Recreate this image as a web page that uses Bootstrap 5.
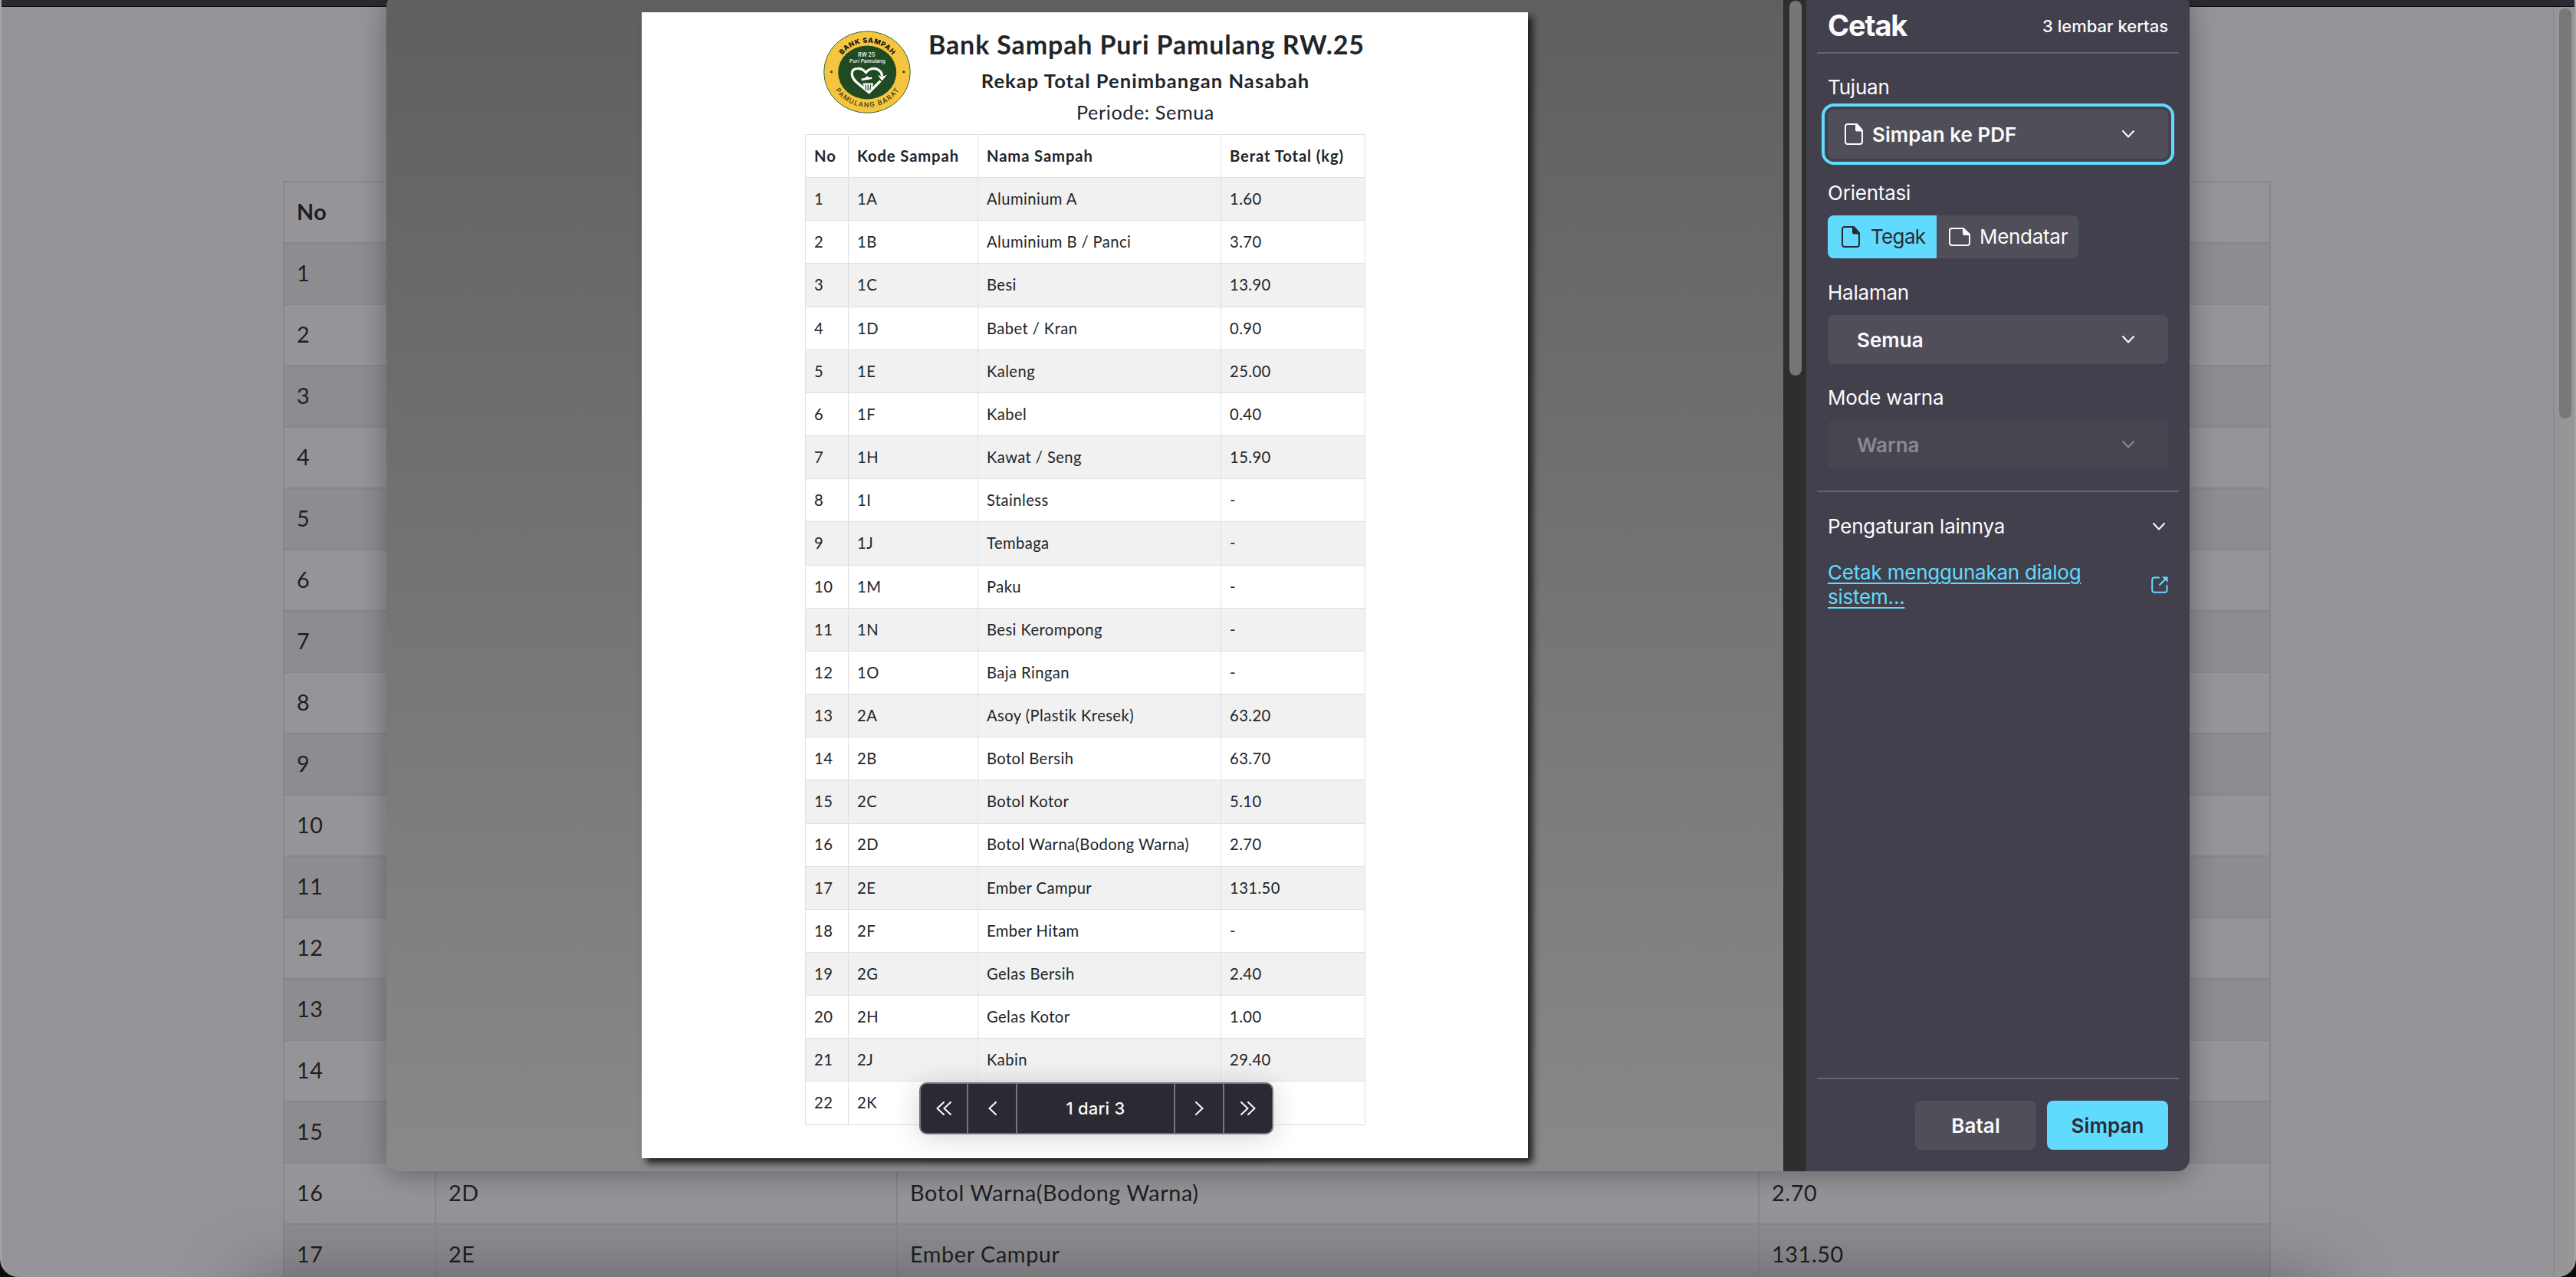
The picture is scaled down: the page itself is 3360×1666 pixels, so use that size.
<!DOCTYPE html>
<html lang="id">
<head>
<meta charset="utf-8">
<title>Cetak</title>
<link href="https://cdn.jsdelivr.net/npm/bootstrap@5.3.0/dist/css/bootstrap.min.css" rel="stylesheet">
<style>
html,body{height:1666px;margin:0;overflow:hidden;background:#0c0b0d}
body{font-family:Lato,sans-serif;color:#212529}
.window{width:3360px;height:1666px;background:#959499;border-radius:0 0 24px 24px;border:solid #a4a4a8;border-width:0 2px}
.chrome-bar{height:9px;margin:0 -2px;background:#2b2a33;border-bottom:1px solid #0c0c0f}
.viewport{height:1657px}
.back-scroll{width:28px;background:#969696;border-left:2px solid #8c8c90;padding:2px 0 0 6px}
.back-scroll i{display:block;width:16px;height:535px;border-radius:8px;background:#777779}
.grid-table{table-layout:fixed;margin:0;border-collapse:collapse;--bs-table-bg:transparent}
.grid-table th,.grid-table td{vertical-align:middle;white-space:nowrap;line-height:1.2;box-shadow:none!important}
.back-table{width:2591px;margin:227px 0 0 367px;font-size:28.8px;letter-spacing:.6px}
.back-table th,.back-table td{height:80px;padding:0 16px 2px;border:2px solid #87868b;color:#1e1f22}
.back-table tbody tr:nth-child(odd)>*{background:#8d8c91}
.dock-shade{left:320px;top:1672px;width:2710px;height:200px;box-shadow:0 0 96px rgba(0,0,0,.34)}
.dialog-box{left:504px;top:-8px;width:2352px;height:1536px;border-radius:16px;box-shadow:0 4px 36px rgba(0,0,0,.32)}
.preview{width:1822px;background:linear-gradient(#5f5f5f,#898989);padding:24px 0 0 333px}
.sheet{width:1156px;height:1495px;background:#fff;box-shadow:6px 6px 9px #1c1c1c;padding-left:213px}
.sheet-head{height:159px;padding:24px 0 0 24px;gap:23px}
.sheet-head svg{width:114px;height:108px}
.titles{width:566px;margin-top:-2px}
.t-one{font-size:34px;font-weight:700;line-height:40px;height:49px;letter-spacing:.86px}
.t-two{font-size:25.5px;font-weight:700;line-height:36px;height:41px;letter-spacing:1.07px}
.t-three{font-size:25.2px;line-height:36px;letter-spacing:.6px}
.print-table{width:730px;height:1292px;font-size:20.2px;letter-spacing:.42px}
.print-table th,.print-table td{height:56.17px;padding:0 11px 1px;border:1px solid #dfe0e3;color:#212529}
.print-table th{letter-spacing:.9px}
.print-table tbody tr:nth-child(odd)>*{background:#f1f1f1}
.track{width:30px;background:#2e2e2e;padding:9px 6px 0 8px}
.track i{display:block;width:16px;height:489px;border-radius:8px;background:#767676}
.pager{left:695px;top:1420px;width:462px;height:68px;background:#2b2a33;border:2px solid #76757a;border-radius:10px;color:#fbfbfe;font:500 22px Inter,sans-serif;letter-spacing:.25px;box-shadow:0 4px 36px rgba(0,0,0,.17)}
.pager>div{width:64px;border-right:2px solid #76757a}
.pager>div:first-child{width:62px}
.pager>div:nth-child(3){width:206px}
.pager>div:last-child{width:62px;border:0}
.side{width:500px;background:#42404c;color:#fbfbfe;font-family:Inter,sans-serif;font-size:26px;line-height:32px;letter-spacing:-.22px;padding:0 14px}
.side svg,.pager svg{fill:none;stroke:currentColor;flex:none}
.side-head{height:78px;padding:3px 14px 0;border-bottom:2px solid #64636d}
.side-head h1{font-size:38px;font-weight:700;letter-spacing:-1.15px;margin:4px 0 0}
.side-head span{font-size:22px;font-weight:500;letter-spacing:0;margin-top:4px}
.side-form{padding:27px 14px 28px;border-bottom:2px solid #64636d}
.caption{height:46px;padding-top:1px}
.group+.group{margin-top:28px}
.group.tight{margin-top:27px!important}
.tight .caption{height:46px}
.pick{height:64px;border-radius:8px;background:#504e59;font-weight:600;letter-spacing:.03px;padding:0 44px 0 38px}
.pick span{padding-top:1px}
.pick.has-icon{padding-left:22px;outline:4px solid #61dbfd;outline-offset:4px}
.pick.off{background:#474550;color:#8a8991}
.seg{width:327px;height:56px;border-radius:8px;overflow:hidden;background:#504e59}
.seg-on{width:142px;background:#61dbfd;color:#2b2a33;padding-left:18px;gap:14px;letter-spacing:-.66px}
.seg-off{padding-left:16px;gap:12px;letter-spacing:-.3px}
.side-more{padding:29px 14px 0}
.more-row{margin-bottom:28px}
.side-more a{color:#61dbfd;text-decoration:underline;text-decoration-thickness:2px;text-underline-offset:4px;width:340px}
.side-foot{border-top:2px solid #64636d;padding:28px 14px;gap:14px}
.act{width:158px;height:64px;border-radius:8px;border:0;background:#504e59;color:#fbfbfe;font-size:26px;font-weight:600;letter-spacing:.1px;padding:1px 0 0}
.act.go{background:#61dbfd;color:#2b2a33}
</style>
<script src="https://cdn.jsdelivr.net/npm/bootstrap@5.3.0/dist/js/bootstrap.bundle.min.js"></script>
</head>
<body>
<div class="window position-relative overflow-hidden">
  <div class="chrome-bar"></div>
  <div class="viewport d-flex justify-content-between">
    <div><table class="table grid-table back-table">
      <colgroup><col style="width:198px"><col style="width:602px"><col style="width:1124px"><col style="width:667px"></colgroup>
      <thead><tr><th>No</th><th>Kode Sampah</th><th>Nama Sampah</th><th>Berat Total (kg)</th></tr></thead>
      <tbody data-rows="17"></tbody>
    </table></div>
    <div class="back-scroll"><i></i></div>
  </div>
  <div class="dock-shade position-absolute"></div>
</div>

<div class="dialog-box position-absolute d-flex overflow-hidden">
  <div class="preview">
    <div class="sheet">
      <div class="sheet-head d-flex">
        <svg viewBox="14.5 9.5 114 108">
          <defs>
            <path id="arcTop" d="M32 63.7 A39.7 38.6 0 0 1 111.4 63.7"/>
            <path id="arcLow" d="M23.4 63.7 A48.3 45.6 0 0 0 120 63.7"/>
          </defs>
          <ellipse cx="71.5" cy="63.6" rx="56.3" ry="53.2" fill="#f5c540" stroke="#2f6a3a" stroke-width="1"/>
          <ellipse cx="71.7" cy="64" rx="38" ry="35" fill="#1f4a22"/>
          <circle cx="25" cy="63.2" r="1.5" fill="#2c3a1c"/><circle cx="119.3" cy="63.2" r="1.5" fill="#2c3a1c"/>
          <g font-family="Inter,sans-serif" text-anchor="middle">
            <text font-size="9" font-weight="800" fill="#111"><textPath href="#arcTop" startOffset="50%" textLength="75">BANK SAMPAH</textPath></text>
            <text font-size="8.6" font-weight="500" fill="#33310f"><textPath href="#arcLow" startOffset="50%" textLength="98">PAMULANG BARAT</textPath></text>
            <text x="70.7" y="43" font-size="7" font-weight="600" fill="#e9efe6">RW 25</text>
            <text x="71.8" y="51" font-size="6.6" font-weight="600" fill="#e9efe6" textLength="46.5">Puri Pamulang</text>
          </g>
          <path d="M89 75 L74 90 L58 77 C49 69 50 59 59 59 C65 58.500 68 62 70 64 C74 59 80 58 84 59.500 C89 61.500 91 65 91 69" fill="none" stroke="#fff" stroke-width="3.200"/>
          <path d="M85.500 67.500 L91 69.500 L97.500 67 L91 75z" fill="#fff"/>
          <path d="M64 72 L77.500 70 L77.800 72.500 L64.500 74.800z M69 70 l4-1 .5 2-4 .7z" fill="#fff"/>
          <path d="M66 78 H79.500 L77.500 88 L73.500 90.500 L68.500 87.500z" fill="#fff"/>
          <path d="M69.300 80 l.8 7 M72.700 80 v7.500 M76.200 80 l-.7 7" stroke="#1f4a22" stroke-width="1.300" fill="none"/>
        </svg>
        <div class="titles text-center text-nowrap">
          <div class="t-one">Bank Sampah Puri Pamulang RW.25</div>
          <div class="t-two">Rekap Total Penimbangan Nasabah</div>
          <div class="t-three">Periode: Semua</div>
        </div>
      </div>
      <table class="table grid-table print-table">
        <colgroup><col style="width:56px"><col style="width:169px"><col style="width:317px"><col style="width:188px"></colgroup>
        <thead><tr><th>No</th><th>Kode Sampah</th><th>Nama Sampah</th><th>Berat Total (kg)</th></tr></thead>
        <tbody data-rows="22"></tbody>
      </table>
    </div>
  </div>
  <div class="track"><i></i></div>

  <div class="side d-flex flex-column">
    <div class="side-head d-flex justify-content-between align-items-center"><h1>Cetak</h1><span>3 lembar kertas</span></div>
    <div class="side-form">
      <div class="group">
        <div class="caption">Tujuan</div>
        <div class="pick has-icon d-flex align-items-center">
          <svg class="me-2" width="24" height="28" viewBox="0 0 24 28"><path d="M4 1h12l7 8v15a3 3 0 0 1-3 3H4a3 3 0 0 1-3-3V4a3 3 0 0 1 3-3z" stroke-width="2"/><path d="M14 1h2l7 8v1.500h-7a2 2 0 0 1-2-2z" fill="currentColor" stroke="none"/></svg>
          <span class="flex-grow-1 ps-1">Simpan ke PDF</span>
          <svg width="16" height="10" viewBox="0 0 16 10"><path d="M1 1l7 7.500L15 1" stroke-width="2" stroke-linecap="round" stroke-linejoin="round"/></svg>
        </div>
      </div>
      <div class="group">
        <div class="caption">Orientasi</div>
        <div class="seg d-flex">
          <div class="seg-on d-flex align-items-center">
            <svg width="24" height="28" viewBox="0 0 24 28"><path d="M4 1h12l7 8v15a3 3 0 0 1-3 3H4a3 3 0 0 1-3-3V4a3 3 0 0 1 3-3z" stroke-width="2"/><path d="M14 1h2l7 8v1.500h-7a2 2 0 0 1-2-2z" fill="currentColor" stroke="none"/></svg>
            <span>Tegak</span>
          </div>
          <div class="seg-off d-flex align-items-center">
            <svg width="28" height="24" viewBox="0 0 28 24"><path d="M4 1h15l8 8v11a3 3 0 0 1-3 3H4a3 3 0 0 1-3-3V4a3 3 0 0 1 3-3z" stroke-width="2"/><path d="M18 1h1l8 8v1h-7a2 2 0 0 1-2-2z" fill="currentColor" stroke="none"/></svg>
            <span>Mendatar</span>
          </div>
        </div>
      </div>
      <div class="group">
        <div class="caption">Halaman</div>
        <div class="pick d-flex align-items-center"><span class="flex-grow-1">Semua</span>
          <svg width="16" height="10" viewBox="0 0 16 10"><path d="M1 1l7 7.500L15 1" stroke-width="2" stroke-linecap="round" stroke-linejoin="round"/></svg></div>
      </div>
      <div class="group tight">
        <div class="caption">Mode warna</div>
        <div class="pick off d-flex align-items-center"><span class="flex-grow-1">Warna</span>
          <svg width="16" height="10" viewBox="0 0 16 10"><path d="M1 1l7 7.500L15 1" stroke-width="2" stroke-linecap="round" stroke-linejoin="round"/></svg></div>
      </div>
    </div>
    <div class="side-more flex-grow-1">
      <div class="more-row d-flex align-items-center justify-content-between pe-1"><span>Pengaturan lainnya</span>
        <svg width="16" height="10" viewBox="0 0 16 10"><path d="M1 1l7 7.500L15 1" stroke-width="2" stroke-linecap="round" stroke-linejoin="round"/></svg></div>
      <div class="d-flex align-items-center justify-content-between"><a href="#">Cetak menggunakan dialog sistem...</a>
        <svg width="22" height="22" viewBox="0 0 22 22" style="color:#61dbfd"><path d="M10 1.500H4A2.800 2.800 0 0 0 1.200 4.300V18A2.800 2.800 0 0 0 4 20.800h13.700a2.800 2.800 0 0 0 2.800-2.800v-6M11 11l8-8" stroke-width="2" stroke-linecap="round"/><path d="M14 .5h7.500V8z" fill="currentColor" stroke="none"/></svg></div>
    </div>
    <div class="side-foot d-flex justify-content-end"><button class="act">Batal</button><button class="act go">Simpan</button></div>
  </div>

  <div class="pager position-absolute d-flex">
    <div class="d-flex align-items-center justify-content-center"><svg width="20" height="18" viewBox="0 0 20 18"><path d="M10 1L1.500 9L10 17M19 1L10.500 9L19 17" stroke-width="2" stroke-linecap="round"/></svg></div>
    <div class="d-flex align-items-center justify-content-center"><svg width="11" height="18" viewBox="0 0 11 18"><path d="M10 1L1.500 9L10 17" stroke-width="2" stroke-linecap="round"/></svg></div>
    <div class="d-flex align-items-center justify-content-center"><span>1 dari 3</span></div>
    <div class="d-flex align-items-center justify-content-center"><svg width="11" height="18" viewBox="0 0 11 18"><path d="M1 1l8.500 8L1 17" stroke-width="2" stroke-linecap="round"/></svg></div>
    <div class="d-flex align-items-center justify-content-center"><svg width="20" height="18" viewBox="0 0 20 18"><path d="M1 1l8.500 8L1 17M10 1l8.500 8L10 17" stroke-width="2" stroke-linecap="round"/></svg></div>
  </div>
</div>
<script>
const items = [["1A","Aluminium A","1.60"],["1B","Aluminium B / Panci","3.70"],["1C","Besi","13.90"],["1D","Babet / Kran","0.90"],["1E","Kaleng","25.00"],["1F","Kabel","0.40"],["1H","Kawat / Seng","15.90"],["1I","Stainless","-"],["1J","Tembaga","-"],["1M","Paku","-"],["1N","Besi Kerompong","-"],["1O","Baja Ringan","-"],["2A","Asoy (Plastik Kresek)","63.20"],["2B","Botol Bersih","63.70"],["2C","Botol Kotor","5.10"],["2D","Botol Warna(Bodong Warna)","2.70"],["2E","Ember Campur","131.50"],["2F","Ember Hitam","-"],["2G","Gelas Bersih","2.40"],["2H","Gelas Kotor","1.00"],["2J","Kabin","29.40"],["2K","",""]];
document.querySelectorAll("tbody[data-rows]").forEach(body => {
  body.innerHTML = items.slice(0, +body.dataset.rows).map((r, i) =>
    `<tr><td>${i + 1}</td>${r.map(c => `<td>${c}</td>`).join("")}</tr>`).join("");
});
</script>
</body>
</html>
